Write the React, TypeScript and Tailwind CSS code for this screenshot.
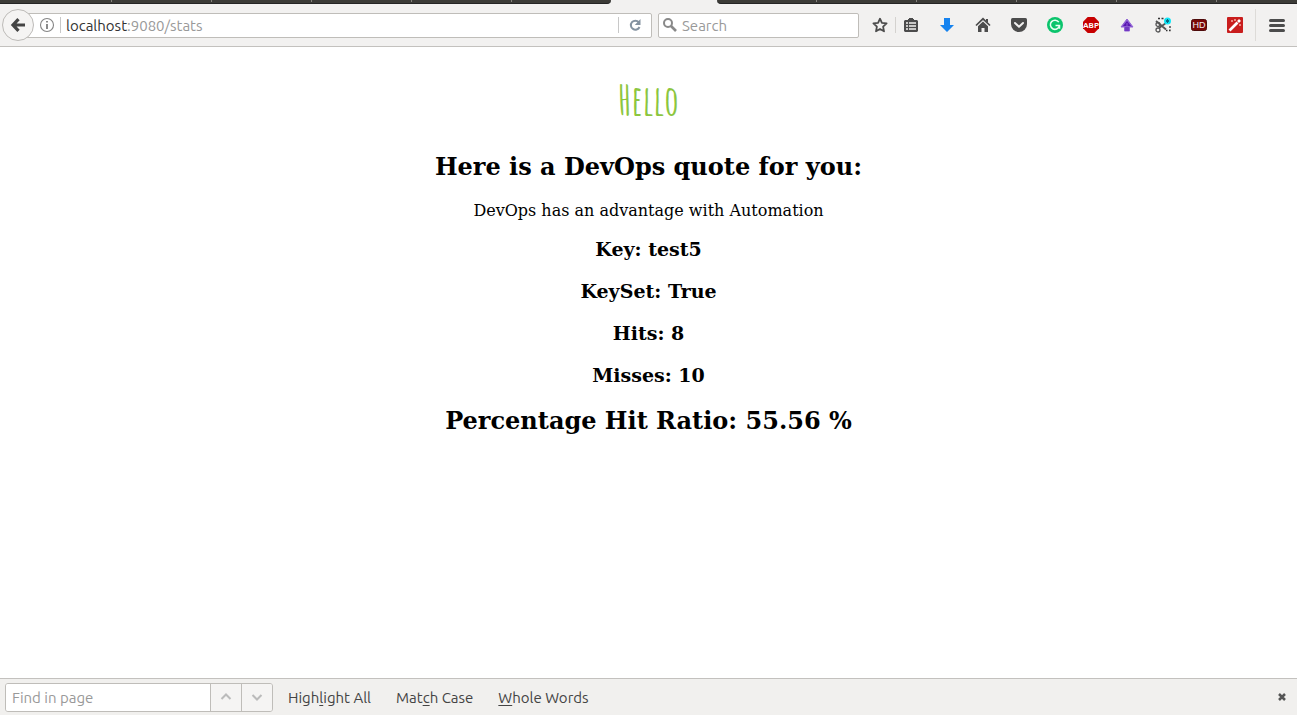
import React from "react";

function ToolButton({ label, children, className = "w-9" }: { label: string; children: React.ReactNode; className?: string }) {
  return (
    <button type="button" aria-label={label} className={`flex h-8 shrink-0 items-center justify-center ${className}`}>
      {children}
    </button>
  );
}

function Icon({ children, size = 16 }: { children: React.ReactNode; size?: number }) {
  return (
    <svg width={size} height={size} viewBox={`0 0 ${size} ${size}`} fill="none" aria-hidden="true">
      {children}
    </svg>
  );
}

function TabTicks({ count }: { count: number }) {
  return (
    <>
      {Array.from({ length: count }, (_, i) => (
        <span key={i} className="flex w-[100px] shrink-0 justify-end">
          <span className="h-[2px] w-px bg-[#85837e]" />
        </span>
      ))}
    </>
  );
}

function TabStrip() {
  return (
    <div className="flex h-[4px] bg-[#f2f1f0]">
      <div className="flex flex-[611] overflow-hidden rounded-br-[8px] border-b border-[#242424] bg-[#3c3b37]">
        <span className="w-3 shrink-0" />
        <TabTicks count={5} />
      </div>
      <div className="flex-[106]" />
      <div className="flex flex-[580] overflow-hidden rounded-bl-[8px] border-b border-[#242424] bg-[#3c3b37]">
        <TabTicks count={5} />
      </div>
    </div>
  );
}

function Toolbar() {
  return (
    <header className="flex h-[43px] items-center border-b border-[#c3c1be] bg-[#f2f1f0] pl-[2px] text-[#4c4c4c]">
      <button type="button" aria-label="Back" className="z-10 flex h-8 w-8 shrink-0 items-center justify-center rounded-full border border-[#bdbbb8] bg-[#f5f4f3]">
        <Icon>
          <path d="M8.5 2.2 3 8l5.500 5.800M3.500 8H15" stroke="#444" strokeWidth="3.2" />
        </Icon>
      </button>
      <div className="-ml-2 flex h-[25px] min-w-0 flex-1 items-center rounded-r-[2px] border border-[#bfbdb9] bg-white pl-[12px]">
        <button type="button" aria-label="Site information" className="shrink-0">
          <Icon>
            <circle cx="8" cy="8" r="6.500" stroke="#858585" strokeWidth="1.1" />
            <path d="M8 7v5M8 4v1.500" stroke="#777" strokeWidth="1.700" />
          </Icon>
        </button>
        <span className="ml-[5px] h-4 w-px bg-[#c8c8c8]" />
        <div role="textbox" aria-label="Address" className="min-w-0 flex-1 pt-[2px] pl-[5px] text-[15px] leading-5 text-[#999]">
          <span className="text-[#333]">localhost</span>:9080/stats
        </div>
        <span className="h-4 w-px bg-[#c8c8c8]" />
        <button type="button" aria-label="Reload" className="flex w-8 items-center justify-center">
          <Icon>
            <path d="M11.800 5.200A4.500 4.500 0 1 0 12.500 10" stroke="#8492a0" strokeWidth="2" />
            <path d="M13.500 2v6H7.800z" fill="#8492a0" />
          </Icon>
        </button>
      </div>
      <label className="ml-[6px] flex h-[25px] w-[201px] shrink-0 items-center rounded-[2px] border border-[#bfbdb9] bg-white pl-[3px]">
        <Icon>
          <circle cx="6" cy="6" r="4" stroke="#898989" strokeWidth="2" />
          <path d="m9 9 5 5" stroke="#898989" strokeWidth="2.600" />
        </Icon>
        <input type="text" aria-label="Search" placeholder="Search" className="min-w-0 flex-1 bg-transparent pt-[2px] pl-1 text-[15px] leading-5 outline-none placeholder:text-[#999]" />
      </label>
      <nav aria-label="Browser tools" className="flex shrink-0 items-center pl-[9px]">
        <ToolButton label="Bookmark this page" className="w-6">
          <Icon>
            <path d="m8 1.700 1.900 4.200 4.700.5-3.500 3.200.9 4.700L8 12l-4 2.300.9-4.700L1.400 6.400l4.700-.5z" stroke="#4c4c4c" strokeWidth="1.800" strokeLinejoin="round" />
          </Icon>
        </ToolButton>
        <span className="ml-[3px] h-4 w-px bg-[#d4d2cf]" />
        <ToolButton label="Bookmarks" className="w-[30px]">
          <Icon>
            <path d="M5 3V2h1V1h4v1h1v1h3l1 1v10l-1 1H2l-1-1V4l1-1z" fill="#4c4c4c" />
            <path d="M3 6h2M3 9h2M3 12h2M6 6h7M6 9h7M6 12h7" stroke="#f2f1f0" strokeWidth="1.700" />
          </Icon>
        </ToolButton>
        <ToolButton label="Downloads" className="w-[42px]">
          <Icon>
            <path d="M5 1h6v7h4l-7 7-7-7h4z" fill="#1683ef" />
          </Icon>
        </ToolButton>
        <ToolButton label="Home" className="w-[30px]">
          <Icon>
            <path d="M1 8.500 8 1.800l7 6.700" stroke="#4c4c4c" strokeWidth="1.700" />
            <path d="m8 4.500 5 4.700V15h-3.500v-4h-3v4H3V9.200zM11 2h2v4l-2-2z" fill="#4c4c4c" />
          </Icon>
        </ToolButton>
        <span className="w-[3px]" />
        <ToolButton label="Pocket">
          <Icon>
            <path d="M1.500 1h13Q16 1 16 2.500V7a8 8 0 0 1-16 0V2.500Q0 1 1.500 1" fill="#4c4c4c" />
            <path d="m4 6 4 3.800L12 6" stroke="#f2f1f0" strokeWidth="2" strokeLinecap="round" strokeLinejoin="round" />
          </Icon>
        </ToolButton>
        <ToolButton label="Writing assistant">
          <Icon>
            <circle cx="8" cy="8" r="8" fill="#0bc46c" />
            <path d="M11.800 5.200A4.600 4.600 0 1 0 12.400 9M8.500 8.500h4v3.200" stroke="#eafff3" strokeWidth="1.500" />
          </Icon>
        </ToolButton>
        <ToolButton label="Ad blocker">
          <Icon>
            <path d="M4.700 0h6.600L16 4.700v6.600L11.300 16H4.700L0 11.300V4.700z" fill="#c70000" />
            <text x="8" y="11" textAnchor="middle" fill="white" fontFamily="Ubuntu, Open Sans, sans-serif" fontSize="8" fontWeight="bold">ABP</text>
          </Icon>
        </ToolButton>
        <ToolButton label="Upload">
          <Icon>
            <path d="m8 2 6 8h-3.500v4h-5v-4H2z" fill="#8f62d4" stroke="#8f62d4" />
            <path d="m8 4 4.500 5.500h-3V14h-3V9.500h-3z" fill="#5b16b3" />
            <path d="M8 6v8M4 9.500h8" stroke="#8a5bd0" />
          </Icon>
        </ToolButton>
        <ToolButton label="Screenshot">
          <Icon>
            <path d="M3 1.500h6M15 9v4.500h-4" stroke="#333" strokeWidth="1.300" strokeDasharray="2 1.500" />
            <path d="m1 4 10 8.500M4 11l7-5" stroke="#555" strokeWidth="1.800" />
            <circle cx="3" cy="7.500" r="2" stroke="#555" strokeWidth="1.300" />
            <circle cx="3" cy="13" r="2" stroke="#555" strokeWidth="1.300" />
            <circle cx="12.500" cy="4" r="3.500" fill="#10e8f8" />
            <path d="M12.500 2v4M10.800 3l3.400 2M10.800 5l3.400-2" stroke="#086782" strokeWidth="1" />
          </Icon>
        </ToolButton>
        <ToolButton label="High definition">
          <Icon>
            <rect x=".5" y="2.500" width="15" height="11" rx="2" fill="#7c0707" stroke="#4e0b0b" />
            <text x="8" y="11" textAnchor="middle" fill="#eee" fontFamily="Liberation Sans, sans-serif" fontSize="9">HD</text>
          </Icon>
        </ToolButton>
        <ToolButton label="Magic wand">
          <Icon>
            <rect width="16" height="16" rx="1" fill="#c91d1d" />
            <path d="m2.500 13.500 8-8" stroke="white" strokeWidth="2.600" />
            <path d="m11 5 2-2" stroke="white" strokeWidth="2.600" />
            <path d="M5 3v2M4 4h2M8 2v2M7 3h2M13 7v2M12 8h2" stroke="#ffc5b9" strokeWidth=".8" />
          </Icon>
        </ToolButton>
        <span className="ml-[2px] h-8 w-px bg-[#dddbd8]" />
        <ToolButton label="Open menu" className="w-[41px]">
          <Icon>
            <path d="M1.500 3.500h13M1.500 8.500h13M1.500 13.500h13" stroke="#4c4c4c" strokeWidth="3" strokeLinecap="round" />
          </Icon>
        </ToolButton>
      </nav>
    </header>
  );
}

function FindBar() {
  return (
    <footer className="flex h-[37px] items-center border-t border-[#c3c1be] bg-[#f1f0ee] pl-[5px] pr-2 text-[15px] leading-5 text-[#444]">
      <div className="flex h-[29px] overflow-hidden rounded-[3px] border border-[#bfbdb9]">
        <input type="text" aria-label="Find in page" placeholder="Find in page" className="w-[204px] bg-white px-[6px] pt-[2px] outline-none placeholder:text-[#999]" />
        <button type="button" aria-label="Previous match" className="flex w-[31px] items-center justify-center border-l border-[#bfbdb9] bg-[#f5f4f3]">
          <Icon><path d="m3.500 10 4.500-4.500 4.500 4.500" stroke="#bbb" strokeWidth="2" /></Icon>
        </button>
        <button type="button" aria-label="Next match" className="flex w-[31px] items-center justify-center border-l border-[#bfbdb9] bg-[#f5f4f3]">
          <Icon><path d="m3.500 6 4.500 4.500L12.500 6" stroke="#bbb" strokeWidth="2" /></Icon>
        </button>
      </div>
      <div className="flex gap-[25px] pt-[2px] pl-[15px]">
        <button type="button">High<span className="underline underline-offset-2">l</span>ight All</button>
        <button type="button">Mat<span className="underline underline-offset-2">c</span>h Case</button>
        <button type="button"><span className="underline underline-offset-2">W</span>hole Words</button>
      </div>
      <button type="button" aria-label="Close find bar" className="ml-auto p-[3px]">
        <Icon size={8}><path d="m1 1 6 6M7 1 1 7" stroke="#555" strokeWidth="2.500" /></Icon>
      </button>
    </footer>
  );
}

export default function App() {
  return (
    <div className="flex min-h-screen flex-col bg-white font-['Ubuntu','Noto_Sans',sans-serif]">
      <TabStrip />
      <Toolbar />
      <main className="flex flex-1 flex-col items-center pt-[33px] text-center font-['DejaVu_Serif',serif] text-black">
        <h1 className="font-['Amatic_SC','DejaVu_Sans_Condensed',sans-serif] text-[40px] leading-[40px] font-bold text-[#8cc63f]">Hello</h1>
        <h2 className="mt-[33px] text-2xl leading-[28px] font-bold">Here is a DevOps quote for you:</h2>
        <p className="mt-5 text-base leading-5">DevOps has an advantage with Automation</p>
        <div className="mt-[17px] flex flex-col gap-5 text-[19px] leading-[22px] font-bold">
          <h3>Key: test5</h3>
          <h3>KeySet: True</h3>
          <h3>Hits: 8</h3>
          <h3>Misses: 10</h3>
        </div>
        <h2 className="mt-[21px] text-2xl leading-[28px] font-bold">Percentage Hit Ratio: 55.56 %</h2>
      </main>
      <FindBar />
    </div>
  );
}
